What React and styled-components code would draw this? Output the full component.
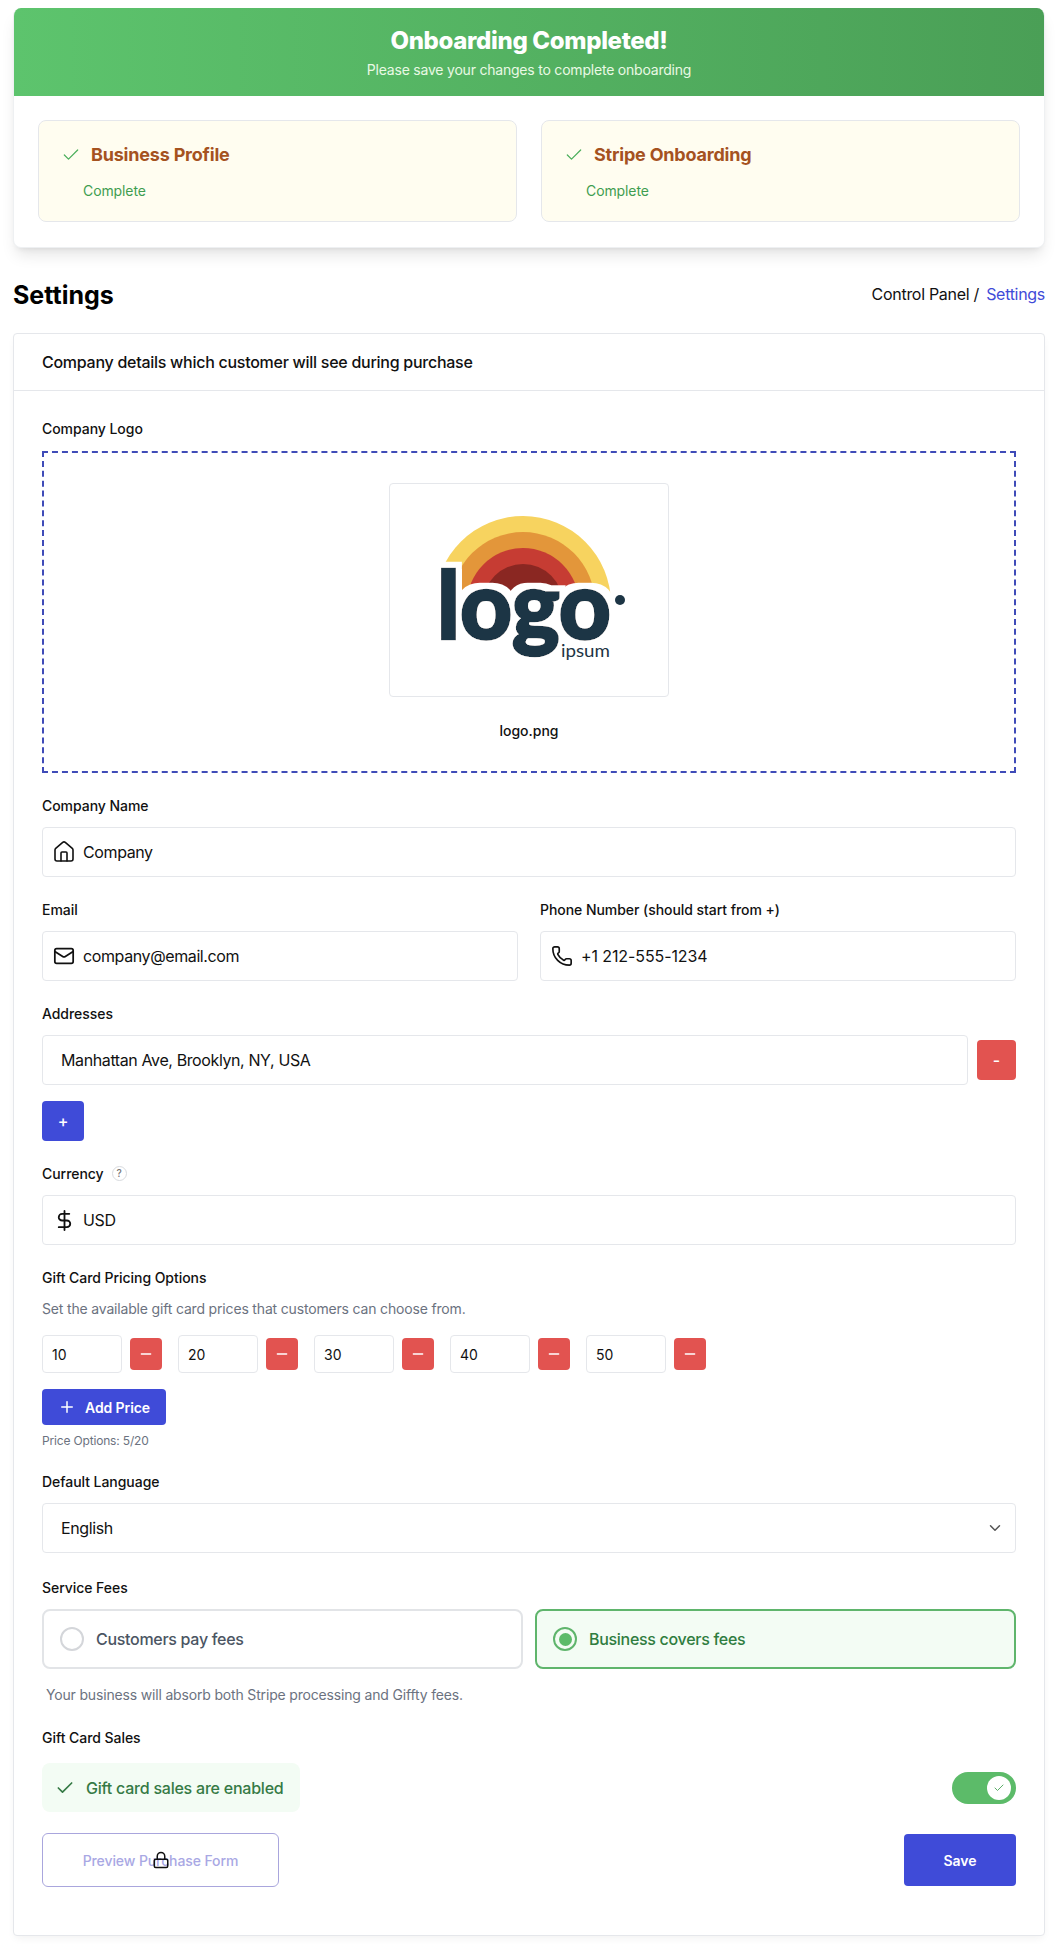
import React from "react";
import styled, { createGlobalStyle } from "styled-components";
import { Check, ChevronDown, DollarSign, House, Lock, Mail, Minus, Phone, Plus } from "lucide-react";

const Global = createGlobalStyle`
  html, body { margin: 0; padding: 0; background: #fff; }
  body { font-family: Inter, "Liberation Sans", sans-serif; color: #111; }
  * { box-sizing: border-box; }
`;

const Page = styled.div`
  width: 1058px;
  padding: 8px 13px 13px;
`;
const Banner = styled.section`
  border-radius: 8px;
  background: #fff;
  overflow: hidden;
  border: 1px solid #eef0f2;
  border-top: 0;
  box-shadow: 0 10px 15px -3px rgba(0,0,0,.1), 0 4px 6px -4px rgba(0,0,0,.1);
`;
const BannerHead = styled.header`
  height: 88px;
  background: linear-gradient(90deg, #5dc46d 0%, #4a9f56 100%);
  margin: 0 -1px;
  padding-top: 17px;
  text-align: center;
  color: #fff;
`;
const BannerTitle = styled.h1`
  margin: 0;
  font-size: 24px;
  line-height: 32px;
  font-weight: 800;
  letter-spacing: -0.35px;
`;
const BannerSub = styled.p`
  margin: 3px 0 0;
  font-size: 14px;
  line-height: 20px;
  color: #e9f9e4;
  letter-spacing: -0.21px;
`;
const StepGrid = styled.div`
  display: grid;
  grid-template-columns: 1fr 1fr;
  gap: 24px;
  padding: 24px 24px 25px;
`;
const Step = styled.div`
  height: 102px;
  background: #fffdf0;
  border: 1px solid #e5e7eb;
  border-radius: 8px;
  padding: 20px 22px;
`;
const StepTitle = styled.div`
  display: flex;
  align-items: center;
  gap: 10px;
  font-size: 18px;
  line-height: 28px;
  font-weight: 700;
  color: #a5521f;
  letter-spacing: -0.2px;
  svg { color: #4caf5c; flex-shrink: 0; }
`;
const StepStatus = styled.div`
  margin: 12px 0 0 22px;
  font-size: 14px;
  line-height: 20px;
  color: #3f9d50;
  letter-spacing: -0.1px;
`;
const TitleRow = styled.div`
  display: flex;
  justify-content: space-between;
  align-items: center;
  height: 36px;
  margin: 29px 0 20px;
`;
const PageTitle = styled.h2`
  margin: 0;
  font-size: 25px;
  line-height: 32px;
  font-weight: 700;
  color: #000;
`;
const Crumbs = styled.div`
  font-size: 16px;
  color: #111;
  margin-top: -2px;
  letter-spacing: -0.3px;
  a { color: #3f4bd8; margin-left: 3px; }
`;
const Card = styled.section`
  border: 1px solid #e5e7eb;
  border-radius: 4px;
  background: #fff;
  box-shadow: 0 4px 8px -2px rgba(0,0,0,.06);
`;
const CardHead = styled.div`
  height: 57px;
  display: flex;
  align-items: center;
  padding: 0 28px;
  border-bottom: 1px solid #e5e7eb;
  font-size: 16px;
  font-weight: 500;
  letter-spacing: -0.27px;
  color: #111;
`;
const CardBody = styled.div`
  padding: 27px 28px 48px;
`;
const Field = styled.div`
  margin-bottom: ${p => p.$mb ?? 22}px;
`;
const Label = styled.div`
  display: flex;
  align-items: center;
  gap: 8px;
  height: 20px;
  margin-bottom: ${p => p.$mb ?? 12}px;
  font-size: 14px;
  font-weight: 500;
  letter-spacing: -0.05px;
  color: #111;
`;
const Help = styled.span`
  width: 15px;
  height: 15px;
  border: 1px solid #d8dade;
  border-radius: 50%;
  display: inline-flex;
  align-items: center;
  justify-content: center;
  font-size: 10px;
  color: #777;
`;
const DropZone = styled.div`
  height: 322px;
  border: 2px dashed #3f4bb8;
  display: flex;
  flex-direction: column;
  align-items: center;
  padding-top: 30px;
`;
const LogoFrame = styled.div`
  width: 280px;
  height: 214px;
  border: 1px solid #e5e7eb;
  border-radius: 4px;
  display: flex;
`;
const FileName = styled.div`
  margin-top: 24px;
  font-size: 14px;
  line-height: 20px;
  font-weight: 500;
  color: #111;
`;
const InputBox = styled.div`
  flex: 1;
  min-width: 0;
  height: 50px;
  border: 1px solid #e5e7eb;
  border-radius: 4px;
  display: flex;
  align-items: center;
  justify-content: ${p => (p.$spread ? "space-between" : "flex-start")};
  padding: 0 ${p => p.$pad ?? 9}px;
  gap: 7px;
  font-size: 16px;
  letter-spacing: ${p => p.$spacing ?? -0.39}px;
  color: #111;
`;
const IconSlot = styled.span`
  width: 24px;
  height: 24px;
  flex-shrink: 0;
  display: flex;
  align-items: center;
  justify-content: center;
  color: ${p => p.$color ?? "#111"};
  margin-right: ${p => p.$mr ?? 0}px;
`;
const Split = styled.div`
  display: grid;
  grid-template-columns: 1fr 1fr;
  gap: 22px;
`;
const AddressRow = styled.div`
  display: flex;
  align-items: center;
  gap: 9px;
  margin-bottom: 16px;
`;
const ActionButton = styled.button`
  width: ${p => p.$w}px;
  height: ${p => p.$h}px;
  flex-shrink: 0;
  border: 0;
  border-radius: 4px;
  background: ${p => (p.$danger ? "#e25350" : "#3f4bd8")};
  color: #fff;
  font: 500 16px Inter, sans-serif;
  padding: 0;
  display: inline-flex;
  align-items: center;
  justify-content: center;
`;
const Hint = styled.p`
  margin: ${p => p.$m ?? "0"};
  font-size: ${p => p.$size ?? 14}px;
  line-height: 20px;
  letter-spacing: -0.17px;
  color: #6b7280;
`;
const Prices = styled.div`
  display: flex;
  gap: 16px;
  margin-top: 16px;
`;
const PriceItem = styled.div`
  display: flex;
  align-items: center;
  gap: 8px;
`;
const PriceInput = styled.div`
  width: 80px;
  height: 38px;
  border: 1px solid #e5e7eb;
  border-radius: 4px;
  padding: 0 9px;
  display: flex;
  align-items: center;
  font-size: 14px;
  color: #111;
`;
const AddPrice = styled.button`
  margin-top: 16px;
  width: 124px;
  height: 36px;
  border: 0;
  border-radius: 4px;
  background: #3f4bd8;
  color: #fff;
  display: flex;
  align-items: center;
  justify-content: center;
  gap: 9px;
  font: 600 14px Inter, sans-serif;
  letter-spacing: -0.1px;
`;
const FeeGrid = styled.div`
  display: grid;
  grid-template-columns: 1fr 1fr;
  gap: 12px;
`;
const FeeOption = styled.div`
  height: 60px;
  border: 2px solid ${p => (p.$active ? "#5fb56c" : "#e2e4e7")};
  background: ${p => (p.$active ? "#f3fcf4" : "#fff")};
  border-radius: 8px;
  display: flex;
  align-items: center;
  gap: 12px;
  padding: 0 16px;
  font-size: 16px;
  font-weight: 500;
  letter-spacing: -0.3px;
  color: ${p => (p.$active ? "#2f7d3f" : "#4b5563")};
`;
const Radio = styled.span`
  width: 24px;
  height: 24px;
  border-radius: 50%;
  border: 2px solid ${p => (p.$active ? "#5fb56c" : "#d4d6da")};
  display: flex;
  align-items: center;
  justify-content: center;
  &::after {
    content: "";
    display: ${p => (p.$active ? "block" : "none")};
    width: 13px;
    height: 13px;
    border-radius: 50%;
    background: #5cbb69;
  }
`;
const SalesRow = styled.div`
  display: flex;
  justify-content: space-between;
  align-items: center;
`;
const SalesStatus = styled.div`
  width: 258px;
  height: 49px;
  background: #f3fcf4;
  border-radius: 8px;
  display: flex;
  align-items: center;
  gap: 11px;
  padding: 0 13px;
  font-size: 16px;
  font-weight: 500;
  letter-spacing: -0.23px;
  color: #357a45;
  white-space: nowrap;
  svg { flex-shrink: 0; }
`;
const Toggle = styled.div`
  width: 64px;
  height: 32px;
  border-radius: 16px;
  background: #5cbb69;
  display: flex;
  align-items: center;
  justify-content: flex-end;
  padding-right: 5px;
`;
const Knob = styled.span`
  width: 24px;
  height: 24px;
  border-radius: 50%;
  background: #fff;
  display: flex;
  align-items: center;
  justify-content: center;
  color: #5cae69;
`;
const Footer = styled.div`
  display: flex;
  justify-content: space-between;
  align-items: center;
  margin-top: 21px;
`;
const PreviewButton = styled.button`
  position: relative;
  width: 237px;
  height: 54px;
  border: 1px solid #a9a6dd;
  border-radius: 6px;
  background: #fff;
  color: #a9a8e4;
  font: 500 14px Inter, sans-serif;
  letter-spacing: -0.1px;
`;
const CursorLock = styled.span`
  position: absolute;
  left: 50%;
  top: 50%;
  transform: translate(-50%, -50%);
  display: flex;
  color: #111;
`;
const SaveButton = styled.button`
  width: 112px;
  height: 52px;
  border: 0;
  border-radius: 4px;
  background: #3f4bd8;
  color: #fff;
  font: 600 14px Inter, sans-serif;
`;

function Logo() {
  return (
    <svg width="278" height="212" viewBox="389 483 278 212">
      <defs>
        <clipPath id="arcClip"><rect x="430" y="500" width="190" height="99" /></clipPath>
        <filter id="logoHalo" x="-10%" y="-20%" width="120%" height="140%">
          <feMorphology in="SourceAlpha" operator="dilate" radius="6" result="grown" />
          <feFlood floodColor="#fff" />
          <feComposite in2="grown" operator="in" result="halo" />
          <feMerge>
            <feMergeNode in="halo" />
            <feMergeNode in="SourceGraphic" />
          </feMerge>
        </filter>
      </defs>
      <g clipPath="url(#arcClip)">
        <circle cx="522" cy="603" r="88" fill="#f7d35f" />
        <circle cx="522" cy="603" r="72" fill="#e3963a" />
        <circle cx="522" cy="603" r="56" fill="#c63c33" />
        <circle cx="522" cy="603" r="40" fill="#8a2722" />
      </g>
      <rect x="430" y="568" width="31" height="40" fill="#fff" />
      <text
        x="436" y="638" textLength="174" lengthAdjust="spacingAndGlyphs"
        fontFamily="Lato, sans-serif" fontWeight="900" fontSize="94"
        fill="#1d3545" stroke="#1d3545" strokeWidth="2.5" filter="url(#logoHalo)"
      >logo</text>
      <circle cx="619" cy="599" r="5" fill="#1d3545" />
      <text x="560" y="656" textLength="49" lengthAdjust="spacingAndGlyphs" fontFamily="Lato, sans-serif" fontWeight="400" fontSize="17" fill="#1d3545">ipsum</text>
    </svg>
  );
}

const prices = [10, 20, 30, 40, 50];

export default function App() {
  return (
    <Page>
      <Global />
      <Banner>
        <BannerHead>
          <BannerTitle>Onboarding Completed!</BannerTitle>
          <BannerSub>Please save your changes to complete onboarding</BannerSub>
        </BannerHead>
        <StepGrid>
          {["Business Profile", "Stripe Onboarding"].map(t => (
            <Step key={t}>
              <StepTitle><Check size={20} strokeWidth={1.5} />{t}</StepTitle>
              <StepStatus>Complete</StepStatus>
            </Step>
          ))}
        </StepGrid>
      </Banner>
      <TitleRow>
        <PageTitle>Settings</PageTitle>
        <Crumbs>Control Panel / <a>Settings</a></Crumbs>
      </TitleRow>
      <Card>
        <CardHead>Company details which customer will see during purchase</CardHead>
        <CardBody>
          <Field $mb={22}>
            <Label $mb={13}>Company Logo</Label>
            <DropZone>
              <LogoFrame><Logo /></LogoFrame>
              <FileName>logo.png</FileName>
            </DropZone>
          </Field>
          <Field>
            <Label>Company Name</Label>
            <InputBox><IconSlot><House size={24} strokeWidth={1.6} /></IconSlot>Company</InputBox>
          </Field>
          <Split>
            <Field>
              <Label>Email</Label>
              <InputBox><IconSlot><Mail size={22} strokeWidth={1.9} /></IconSlot>company@email.com</InputBox>
            </Field>
            <Field>
              <Label>Phone Number (should start from +)</Label>
              <InputBox $spacing={-0.1}><IconSlot><Phone size={22} strokeWidth={1.8} /></IconSlot>+1 212-555-1234</InputBox>
            </Field>
          </Split>
          <Field>
            <Label>Addresses</Label>
            <AddressRow>
              <InputBox $pad={18}>Manhattan Ave, Brooklyn, NY, USA</InputBox>
              <ActionButton $danger $w={39} $h={40}>-</ActionButton>
            </AddressRow>
            <ActionButton $w={42} $h={40}>+</ActionButton>
          </Field>
          <Field>
            <Label>Currency <Help>?</Help></Label>
            <InputBox><IconSlot><DollarSign size={23} strokeWidth={1.9} /></IconSlot>USD</InputBox>
          </Field>
          <Field $mb={20}>
            <Label>Gift Card Pricing Options</Label>
            <Hint>Set the available gift card prices that customers can choose from.</Hint>
            <Prices>
              {prices.map(v => (
                <PriceItem key={v}>
                  <PriceInput>{v}</PriceInput>
                  <ActionButton $danger $w={32} $h={32}><Minus size={16} /></ActionButton>
                </PriceItem>
              ))}
            </Prices>
            <AddPrice><Plus size={18} />Add Price</AddPrice>
            <Hint $size={12} $m="6px 0 0">Price Options: 5/20</Hint>
          </Field>
          <Field $mb={24}>
            <Label>Default Language</Label>
            <InputBox $pad={18} $spread>
              English
              <IconSlot $color="#555" $mr={-10}><ChevronDown size={18} /></IconSlot>
            </InputBox>
          </Field>
          <Field>
            <Label>Service Fees</Label>
            <FeeGrid>
              <FeeOption><Radio />Customers pay fees</FeeOption>
              <FeeOption $active><Radio $active />Business covers fees</FeeOption>
            </FeeGrid>
            <Hint $m="16px 0 0 4px">Your business will absorb both Stripe processing and Giffty fees.</Hint>
          </Field>
          <Field $mb={0}>
            <Label $mb={16}>Gift Card Sales</Label>
            <SalesRow>
              <SalesStatus><Check size={20} />Gift card sales are enabled</SalesStatus>
              <Toggle><Knob><Check size={12} /></Knob></Toggle>
            </SalesRow>
          </Field>
          <Footer>
            <PreviewButton>
              Preview Purchase Form
              <CursorLock><Lock size={18} strokeWidth={2} /></CursorLock>
            </PreviewButton>
            <SaveButton>Save</SaveButton>
          </Footer>
        </CardBody>
      </Card>
    </Page>
  );
}
